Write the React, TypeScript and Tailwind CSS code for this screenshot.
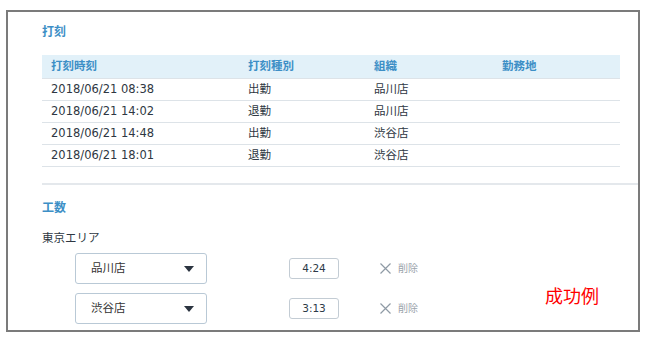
import React from "react";

const font = { fontFamily: '"DejaVu Sans", "Noto Sans CJK JP", sans-serif' };

const rows = [
  ["2018/06/21 08:38", "出勤", "品川店", ""],
  ["2018/06/21 14:02", "退勤", "品川店", ""],
  ["2018/06/21 14:48", "出勤", "渋谷店", ""],
  ["2018/06/21 18:01", "退勤", "渋谷店", ""],
];

function Caret() {
  return (
    <svg width="10" height="6" viewBox="0 0 10 6" className="block">
      <path d="M0 0 L10 0 L5 6 Z" fill="#2b3440" />
    </svg>
  );
}

function XIcon() {
  return (
    <svg width="11" height="11" viewBox="0 0 11 11" className="block">
      <path d="M0.5 0.5 L10.5 10.5 M10.5 0.5 L0.5 10.5" stroke="#8f9aa5" strokeWidth="1.2" fill="none" />
    </svg>
  );
}

function WorkRow({ store, time }: { store: string; time: string }) {
  return (
    <div className="flex items-center h-[31px]">
      <div className="ml-[33px] w-[132px] h-[31px] border border-[#b9c9d6] rounded-[3px] flex items-center justify-between pl-[15px] pr-[12px] text-[11.5px] text-[#333]">
        <span>{store}</span>
        <Caret />
      </div>
      <div className="ml-[82px] w-[50px] h-[21px] border border-[#c3ccd4] rounded-[3px] flex items-center justify-center text-[10.5px] text-[#2d3a48]">
        {time}
      </div>
      <div className="ml-[41px] flex items-center gap-[7px] text-[10px] text-[#9aa3ab]">
        <XIcon />
        <span>削除</span>
      </div>
    </div>
  );
}

export default function App() {
  return (
    <div className="w-[650px] h-[341px] bg-white pt-[10px] pl-[6px]" style={font}>
      <div className="relative w-[634px] h-[322px] border-2 border-[#7b7b7b] bg-white">
        <div className="pl-[34px] pt-[12px]">
          <div className="text-[12px] leading-[16px] text-[#3d8fc6] font-bold">打刻</div>
          <div className="mt-[15px] w-[578px] text-[11.5px]">
            <div className="grid grid-cols-[197px_126px_128px_127px] h-[23px] bg-[#e2f1f9] items-center text-[#3d8fc6] font-bold">
              <div className="pl-[9px]">打刻時刻</div>
              <div className="pl-[9px]">打刻種別</div>
              <div className="pl-[9px]">組織</div>
              <div className="pl-[9px]">勤務地</div>
            </div>
            {rows.map((r, i) => (
              <div
                key={i}
                className="grid grid-cols-[197px_126px_128px_127px] h-[22px] items-center border-t border-[#dde3e8] text-[#2e3742]"
              >
                {r.map((c, j) => (
                  <div key={j} className="pl-[9px]">
                    {c}
                  </div>
                ))}
              </div>
            ))}
            <div className="border-t border-[#dde3e8]" />
          </div>
          <div className="mt-[16px] h-[2px] bg-[#e4e8ec]" />
          <div className="mt-[15px] text-[12px] leading-[16px] text-[#3d8fc6] font-bold">工数</div>
          <div className="mt-[14px] text-[11.5px] leading-[16px] text-[#2e3742]">東京エリア</div>
          <div className="mt-[7px] flex flex-col gap-[9px]">
            <WorkRow store="品川店" time="4:24" />
            <WorkRow store="渋谷店" time="3:13" />
          </div>
        </div>
        <div className="absolute left-[537px] top-[274px] text-[18px] leading-[22px] text-[#ff0000]">成功例</div>
      </div>
    </div>
  );
}
